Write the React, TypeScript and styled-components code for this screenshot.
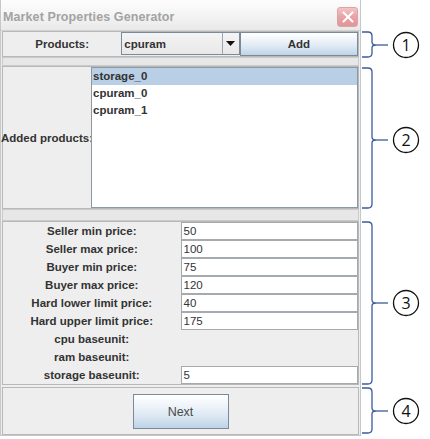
import React from "react";
import styled, { createGlobalStyle } from "styled-components";

const GlobalStyle = createGlobalStyle`
  html, body {
    margin: 0;
    padding: 0;
    background: #ffffff;
  }
  * { box-sizing: border-box; }
`;

const UI_FONT = `"Liberation Sans", Arial, sans-serif`;

const Stage = styled.div`
  display: flex;
  width: 430px;
  height: 439px;
  overflow: hidden;
`;

const Window = styled.div`
  width: 361px;
  height: 436px;
  display: flex;
  flex-direction: column;
  background: #eeeeee;
  border: 1px solid #c4c8cc;
  border-top: none;
  font-family: ${UI_FONT};
`;

const TitleBar = styled.div`
  height: 31px;
  flex: none;
  display: flex;
  align-items: center;
  justify-content: space-between;
  padding: 4px 2px 0 2px;
  background: linear-gradient(#fdfdfd 0%, #f6f6f6 40%, #e9e9e9 100%);
  border-bottom: 1px solid #d2d2d2;
`;

const Title = styled.span`
  font-family: ${UI_FONT};
  font-weight: bold;
  font-size: 12.5px;
  color: #a3a3a3;
  letter-spacing: 0.1px;
`;

const CloseButton = styled.div`
  width: 21px;
  height: 20px;
  display: flex;
  align-items: center;
  justify-content: center;
  border-radius: 3px;
  border: 1px solid #dca4a8;
  background: linear-gradient(#f4c4c6 0%, #e8a2a6 50%, #e0959a 100%);
`;

const Content = styled.div`
  flex: 1;
  display: flex;
  flex-direction: column;
  padding: 0 1px;
`;

const Panel = styled.div<{ $h: number }>`
  height: ${(p) => p.$h}px;
  flex: none;
  border: 1px solid #b8b8b8;
`;

const Separator = styled.div<{ $h: number }>`
  height: ${(p) => p.$h}px;
  flex: none;
  border: 1px solid #cacaca;
  background: #e7e7e7;
`;

const Gap = styled.div<{ $h: number }>`
  height: ${(p) => p.$h}px;
  flex: none;
`;

const ProductsRow = styled(Panel)`
  display: grid;
  grid-template-columns: 1fr 1fr 1fr;
`;

const BoldLabel = styled.div`
  display: flex;
  align-items: center;
  justify-content: center;
  font-weight: bold;
  font-size: 11.5px;
  color: #333333;
  white-space: nowrap;
`;

const Combo = styled.div`
  display: flex;
  border: 1px solid #7a8a99;
  background: linear-gradient(#f4f4f4 0%, #e8e8e8 100%);
  margin-bottom: 1px;
`;

const ComboValue = styled.div`
  flex: 1;
  display: flex;
  align-items: center;
  padding-left: 2px;
  font-weight: bold;
  font-size: 11.5px;
  color: #333333;
`;

const ComboArrow = styled.div`
  width: 17px;
  display: flex;
  align-items: center;
  justify-content: center;
  border-left: 1px solid #9aa6b2;
`;

const OceanButton = styled.div<{ $bold?: boolean }>`
  display: flex;
  align-items: center;
  justify-content: center;
  border: 1px solid #7a8a99;
  background: linear-gradient(#ffffff 0%, #f0f5fa 30%, #dbe7f2 65%, #bed3e7 100%);
  font-size: ${(p) => (p.$bold ? "11.5px" : "12.5px")};
  font-weight: ${(p) => (p.$bold ? "bold" : "normal")};
  color: ${(p) => (p.$bold ? "#333333" : "#4a4a4a")};
`;

const AddedSection = styled(Panel)`
  display: grid;
  grid-template-columns: 88px 1fr;
`;

const ListBox = styled.div`
  border: 1px solid #8c98a4;
  background: #ffffff;
  display: flex;
  flex-direction: column;
`;

const ListItem = styled.div<{ $selected?: boolean }>`
  height: 17px;
  line-height: 17px;
  padding-left: 1px;
  font-weight: bold;
  font-size: 11.5px;
  color: #333333;
  background: ${(p) => (p.$selected ? "#b8cfe5" : "transparent")};
`;

const FormGrid = styled(Panel)`
  display: grid;
  grid-template-columns: 1fr 1fr;
  grid-auto-rows: 18px;
`;

const TextField = styled.div`
  border: 1px solid #a4aab0;
  background: #ffffff;
  padding-left: 2px;
  display: flex;
  align-items: center;
  font-size: 11.5px;
  color: #333333;
`;

const Footer = styled(Panel)`
  display: flex;
  justify-content: center;
  align-items: flex-start;
  padding-top: 6px;
`;

const NextButton = styled(OceanButton)`
  width: 96px;
  height: 35px;
`;

const Annotations = styled.svg`
  width: 69px;
  height: 439px;
  flex: none;
`;

type BraceProps = { top: number; bottom: number; mid: number; label: string };

// A right-facing brace with a lead line to a numbered circle
const Brace = ({ top, bottom, mid, label }: BraceProps) => {
  const x = 11;
  const hook = 1;
  const r = 4;
  const d = [
    `M ${hook} ${top}`,
    `L ${x - r} ${top}`,
    `Q ${x} ${top} ${x} ${top + r}`,
    `L ${x} ${mid - 3}`,
    `Q ${x} ${mid} ${x + 4} ${mid}`,
    `Q ${x} ${mid} ${x} ${mid + 3}`,
    `L ${x} ${bottom - r}`,
    `Q ${x} ${bottom} ${x - r} ${bottom}`,
    `L ${hook} ${bottom}`,
  ].join(" ");
  return (
    <g>
      <path d={d} fill="none" stroke="#3b5b9b" strokeWidth={1.3} />
      <line x1={x + 4} y1={mid} x2={27} y2={mid} stroke="#3b5b9b" strokeWidth={1.3} />
      <circle cx={45} cy={mid} r={12.5} fill="#ffffff" stroke="#111111" strokeWidth={1.3} />
      <text
        x={45}
        y={mid + 6}
        textAnchor="middle"
        fontFamily='"Open Sans", "DejaVu Sans", sans-serif'
        fontSize={16}
        fill="#111111"
      >
        {label}
      </text>
    </g>
  );
};

const fields: { label: string; value?: string }[] = [
  { label: "Seller min price:", value: "50" },
  { label: "Seller max price:", value: "100" },
  { label: "Buyer min price:", value: "75" },
  { label: "Buyer max price:", value: "120" },
  { label: "Hard lower limit price:", value: "40" },
  { label: "Hard upper limit price:", value: "175" },
  { label: "cpu baseunit:" },
  { label: "ram baseunit:" },
  { label: "storage baseunit:", value: "5" },
];

const products = ["storage_0", "cpuram_0", "cpuram_1"];

export default function App() {
  return (
    <>
      <GlobalStyle />
      <Stage>
        <Window>
          <TitleBar>
            <Title>Market Properties Generator</Title>
            <CloseButton>
              <svg width="12" height="12" viewBox="0 0 12 12">
                <path d="M1.5 1.5 L10.5 10.5 M10.5 1.5 L1.5 10.5" stroke="#ffffff" strokeWidth="2" strokeLinecap="round" />
              </svg>
            </CloseButton>
          </TitleBar>
          <Content>
            <ProductsRow $h={26}>
              <BoldLabel>Products:</BoldLabel>
              <Combo>
                <ComboValue>cpuram</ComboValue>
                <ComboArrow>
                  <svg width="9" height="5" viewBox="0 0 9 5">
                    <path d="M0 0 H9 L4.5 5 Z" fill="#111111" />
                  </svg>
                </ComboArrow>
              </Combo>
              <OceanButton $bold>Add</OceanButton>
            </ProductsRow>
            <Separator $h={9} />
            <AddedSection $h={143}>
              <BoldLabel>Added products:</BoldLabel>
              <ListBox>
                {products.map((p, i) => (
                  <ListItem key={p} $selected={i === 0}>
                    {p}
                  </ListItem>
                ))}
              </ListBox>
            </AddedSection>
            <Separator $h={12} />
            <FormGrid $h={164}>
              {fields.map((f) => (
                <React.Fragment key={f.label}>
                  <BoldLabel>{f.label}</BoldLabel>
                  {f.value !== undefined ? <TextField>{f.value}</TextField> : <div />}
                </React.Fragment>
              ))}
            </FormGrid>
            <Gap $h={2} />
            <Footer $h={48}>
              <NextButton>Next</NextButton>
            </Footer>
          </Content>
        </Window>
        <Annotations viewBox="0 0 69 439">
          <Brace top={32} bottom={57} mid={45} label="1" />
          <Brace top={68} bottom={208} mid={140} label="2" />
          <Brace top={222} bottom={384} mid={303} label="3" />
          <Brace top={388} bottom={433} mid={411} label="4" />
        </Annotations>
      </Stage>
    </>
  );
}
